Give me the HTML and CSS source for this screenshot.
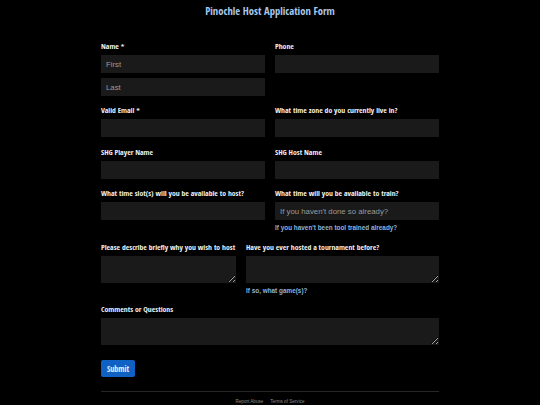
FILE: index.html
```html
<!DOCTYPE html>
<html>
<head>
<meta charset="utf-8">
<link rel="stylesheet" href="styles.css">
</head>
<body>
<div class="page">
  <h1 class="title">Pinochle Host Application Form</h1>
  <form class="form">
    <div class="row">
      <div class="field">
        <label class="label">Name *</label>
        <input class="input" placeholder="First">
        <input class="input second" placeholder="Last">
      </div>
      <div class="field">
        <label class="label">Phone</label>
        <input class="input">
      </div>
    </div>
    <div class="row">
      <div class="field">
        <label class="label">Valid Email *</label>
        <input class="input">
      </div>
      <div class="field">
        <label class="label">What time zone do you currently live in?</label>
        <input class="input">
      </div>
    </div>
    <div class="row">
      <div class="field">
        <label class="label">SHG Player Name</label>
        <input class="input">
      </div>
      <div class="field">
        <label class="label">SHG Host Name</label>
        <input class="input">
      </div>
    </div>
    <div class="row">
      <div class="field">
        <label class="label">What time slot(s) will you be available to host?</label>
        <input class="input">
      </div>
      <div class="field">
        <label class="label">What time will you be available to train?</label>
        <input class="input" placeholder="If you haven't done so already?">
        <div class="help">If you haven't been tool trained already?</div>
      </div>
    </div>
    <div class="row row-wide">
      <div class="field">
        <label class="label">Please describe briefly why you wish to host</label>
        <textarea class="area"></textarea>
      </div>
      <div class="field">
        <label class="label">Have you ever hosted a tournament before?</label>
        <textarea class="area"></textarea>
        <div class="help">If so, what game(s)?</div>
      </div>
    </div>
    <div class="field full">
      <label class="label">Comments or Questions</label>
      <textarea class="area"></textarea>
    </div>
    <div class="actions">
      <button type="button" class="submit">Submit</button>
    </div>
  </form>
  <footer class="footer">
    <a class="flink">Report Abuse</a>
    <a class="flink">Terms of Service</a>
  </footer>
</div>
</body>
</html>
```
FILE: styles.css
```css
html, body {
  margin: 0;
  padding: 0;
  background: #000;
}
body {
  font-family: "Open Sans Condensed", "DejaVu Sans Condensed", "Liberation Sans Narrow", "Open Sans", sans-serif;
  font-stretch: condensed;
  color: #eee;
}
.page {
  width: 338px;
  margin: 0 auto;
  padding-top: 5px;
}
.title {
  margin: 0;
  font-size: 10.6px;
  line-height: 12px;
  font-weight: 700;
  text-align: center;
  color: #a9c8ea;
}
.form {
  margin-top: 24px;
}
.row {
  display: grid;
  grid-template-columns: 1fr 1fr;
  column-gap: 10px;
}
.row-wide {
  grid-template-columns: 135px 1fr;
}
.field {
  display: flex;
  flex-direction: column;
  margin-bottom: 9.4px;
}
.label {
  font-size: 7.7px;
  line-height: 10px;
  font-weight: 700;
  color: #f0f0f0;
  margin-bottom: 4px;
  white-space: nowrap;
}
.input, .area {
  box-sizing: border-box;
  display: block;
  width: 100%;
  height: 18px;
  margin: 0;
  border: none;
  background: #1a1a1a;
  color: #ddd;
  font-family: "Liberation Sans", Arial, sans-serif;
  font-size: 7.8px;
  padding: 0 5px;
  outline: none;
}
.input::placeholder {
  color: #9a9a9a;
}
.second {
  margin-top: 5px;
}
.area {
  height: 27px;
  padding: 4px 5px;
  resize: vertical;
}
.help {
  margin-top: 4px;
  font-family: "Liberation Sans", Arial, sans-serif;
  font-size: 6.4px;
  line-height: 8px;
  font-weight: 700;
  color: #8fb3d9;
}
.actions {
  padding-top: 6px;
}
.submit {
  display: block;
  width: 34px;
  height: 17px;
  border: none;
  border-radius: 2px;
  background: #0f62c4;
  color: #e8f0fa;
  font-family: inherit;
  font-stretch: condensed;
  font-weight: 400;
  font-size: 8px;
  padding: 0;
}
.footer {
  margin-top: 14px;
  border-top: 1px solid #262626;
  padding-top: 7px;
  display: flex;
  justify-content: center;
  gap: 7px;
}
.flink {
  font-family: "Liberation Sans", Arial, sans-serif;
  font-size: 4.6px;
  line-height: 6px;
  color: #8c8c8c;
}
```
